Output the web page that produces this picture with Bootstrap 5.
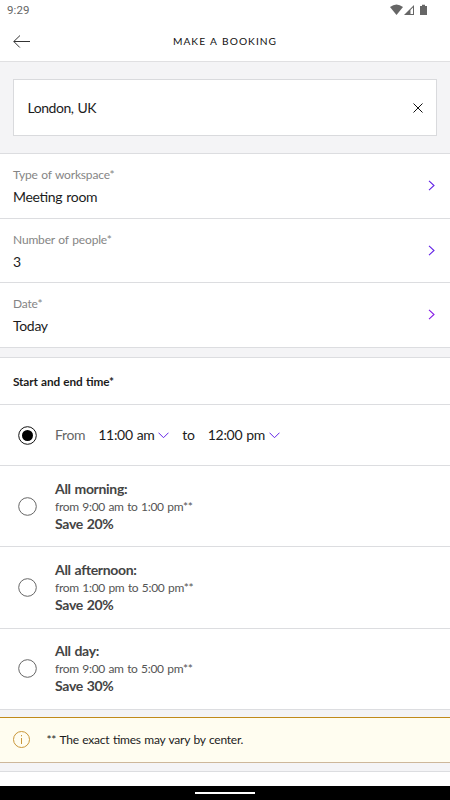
<!DOCTYPE html>
<html lang="en">
<head>
<meta charset="utf-8">
<meta name="viewport" content="width=device-width, initial-scale=1">
<title>Make a booking</title>
<link href="https://cdn.jsdelivr.net/npm/bootstrap@5.3.0/dist/css/bootstrap.min.css" rel="stylesheet">
<style>
body{font-family:Lato,sans-serif;font-size:14px;line-height:18px;letter-spacing:-.32px;word-spacing:.7px;font-feature-settings:"liga" 1;color:#1c1c1c;background:#f4f4f6;height:800px;overflow:hidden}
svg{display:block;flex:none}
.status{height:22px;padding:0 22px 0 7px;font:11.5px/21px Roboto,sans-serif;letter-spacing:.1px;color:#666}
.topbar{height:40px;border-bottom:1px solid #e0e0e2;padding-left:13px}
.title{font-size:10.2px;letter-spacing:1.05px;line-height:39px;color:#111}
.search-wrap{height:91px;padding:17px 13px 0}
.search-box{height:57px;border:1px solid #d9dadd;padding:0 13.5px 0 13.5px;letter-spacing:-.45px}
.line-t{border-top:1px solid #dcdde0}
.line-b{border-bottom:1px solid #dcdde0}
.field{height:64.5px;padding:0 15px 0 13px}
.field-label{font-size:12px;line-height:18px;letter-spacing:-.17px;color:#858585;padding-top:1px}
.field-value{line-height:18px;padding-top:4px;height:22px}
.section-title{height:47px;padding:2px 0 0 13px;font-size:11.8px;letter-spacing:-.15px;font-weight:700}
.time-row{height:61px;padding-left:18px}
.option{height:81.333px;padding-left:18px}
.radio{width:19px;height:19px;margin-right:18px}
.opt-name{font-size:14px;font-weight:700;color:#444}
.opt-time{font-size:12px;color:#555;line-height:17px;letter-spacing:-.3px}
.grey{color:#666}
.times{margin-top:9.5px}
.t1{margin-left:13px;width:56px}
.t2{margin-left:13.5px;width:57px}
.to{margin-left:13px;width:12px}
.chev{margin-left:4px}
.notice{height:46px;margin-top:7px;background:#fffdf0;border-top:1px solid #c08a1a;border-bottom:1px solid #cdb79a;padding-left:13px;font-size:12px;letter-spacing:-.23px}
.note{margin-left:16.5px;padding-top:1px}
.next-card{height:15px;margin-top:8px}
.navbar-sys{height:14px;background:#000}
.pill{width:60px;height:2px;background:#fff}
</style>
<script src="https://cdn.jsdelivr.net/npm/bootstrap@5.3.0/dist/js/bootstrap.bundle.min.js"></script>
</head>
<body class="d-flex flex-column">
<header class="bg-white flex-shrink-0">
  <div class="status d-flex justify-content-between">
    <span>9:29</span>
    <svg width="38" height="14" viewBox="0 0 38 14" fill="#666" class="mt-1"><path d="M0 3.1Q6.500-2 13 3.100L6.500 11z"/><path d="M14 11L24 1v10z"/><path d="M20.500 6L23 3.500V10h-2.500z" fill="#fff"/><path d="M30 2h2V.8h3V2h2v9h-7z"/></svg>
  </div>
  <div class="topbar position-relative d-flex align-items-center">
    <svg width="18" height="14" viewBox="0 0 18 14" fill="none" stroke="#333"><path d="M17 6.500H.8M7 .5L.8 6.500l6 6"/></svg>
    <div class="title position-absolute start-0 w-100 text-center">MAKE A BOOKING</div>
  </div>
</header>
<main class="flex-shrink-0">
  <div class="search-wrap">
    <div class="search-box bg-white d-flex align-items-center justify-content-between">
      <span>London, UK</span>
      <svg width="10" height="10" viewBox="0 0 10 10" stroke="#111"><path d="M.5.5l9 9M9.500.5l-9 9"/></svg>
    </div>
  </div>
  <section class="bg-white line-t">
    <div class="field line-b d-flex align-items-center justify-content-between"><div><div class="field-label">Type of workspace*</div><div class="field-value">Meeting room</div></div><svg width="7" height="11" viewBox="0 0 7 11" fill="none" stroke="#6324e6" stroke-width="1.1"><path d="M1 .8L6 5.500 1 10.200"/></svg></div>
    <div class="field line-b d-flex align-items-center justify-content-between"><div><div class="field-label">Number of people*</div><div class="field-value">3</div></div><svg width="7" height="11" viewBox="0 0 7 11" fill="none" stroke="#6324e6" stroke-width="1.1"><path d="M1 .8L6 5.500 1 10.200"/></svg></div>
    <div class="field line-b d-flex align-items-center justify-content-between"><div><div class="field-label">Date*</div><div class="field-value">Today</div></div><svg width="7" height="11" viewBox="0 0 7 11" fill="none" stroke="#861be6" stroke-width="1.1"><path d="M1 .8L6 5.500 1 10.200"/></svg></div>
  </section>
  <section class="bg-white line-t times">
    <div class="section-title line-b d-flex align-items-center">Start and end time*</div>
    <div class="time-row line-b d-flex align-items-center">
      <svg class="radio" viewBox="0 0 19 19"><circle cx="9.500" cy="9.500" r="8.800" fill="none" stroke="#111"/><circle cx="9.500" cy="9.500" r="5.500"/></svg>
      <span class="grey">From</span><span class="t1 text-nowrap">11:00 am</span>
      <svg class="chev" width="11" height="7" viewBox="0 0 11 7" fill="none" stroke="#6324e6"><path d="M.5.7l5 5 5-5"/></svg>
      <span class="to">to</span><span class="t2 text-nowrap">12:00 pm</span>
      <svg class="chev" width="11" height="7" viewBox="0 0 11 7" fill="none" stroke="#6324e6"><path d="M.5.7l5 5 5-5"/></svg>
    </div>
    <div class="option line-b d-flex align-items-center">
      <svg class="radio" viewBox="0 0 19 19"><circle cx="9.500" cy="9.500" r="8.800" fill="none" stroke="#666"/></svg>
      <div><div class="opt-name">All morning:</div><div class="opt-time">from 9:00 am to 1:00 pm**</div><div class="opt-name">Save 20%</div></div>
    </div>
    <div class="option line-b d-flex align-items-center">
      <svg class="radio" viewBox="0 0 19 19"><circle cx="9.500" cy="9.500" r="8.800" fill="none" stroke="#666"/></svg>
      <div><div class="opt-name">All afternoon:</div><div class="opt-time">from 1:00 pm to 5:00 pm**</div><div class="opt-name">Save 20%</div></div>
    </div>
    <div class="option line-b d-flex align-items-center">
      <svg class="radio" viewBox="0 0 19 19"><circle cx="9.500" cy="9.500" r="8.800" fill="none" stroke="#666"/></svg>
      <div><div class="opt-name">All day:</div><div class="opt-time">from 9:00 am to 5:00 pm**</div><div class="opt-name">Save 30%</div></div>
    </div>
  </section>
  <div class="notice d-flex align-items-center">
    <svg width="17" height="17" viewBox="0 0 17 17" fill="none" stroke="#c9973a"><circle cx="8.500" cy="8.500" r="8"/><path d="M8.500 7v6M8.500 4v1.300"/></svg>
    <span class="note">** The exact times may vary by center.</span>
  </div>
  <div class="next-card bg-white line-t"></div>
</main>
<footer class="navbar-sys flex-shrink-0 d-flex justify-content-center align-items-center"><div class="pill"></div></footer>
</body>
</html>
